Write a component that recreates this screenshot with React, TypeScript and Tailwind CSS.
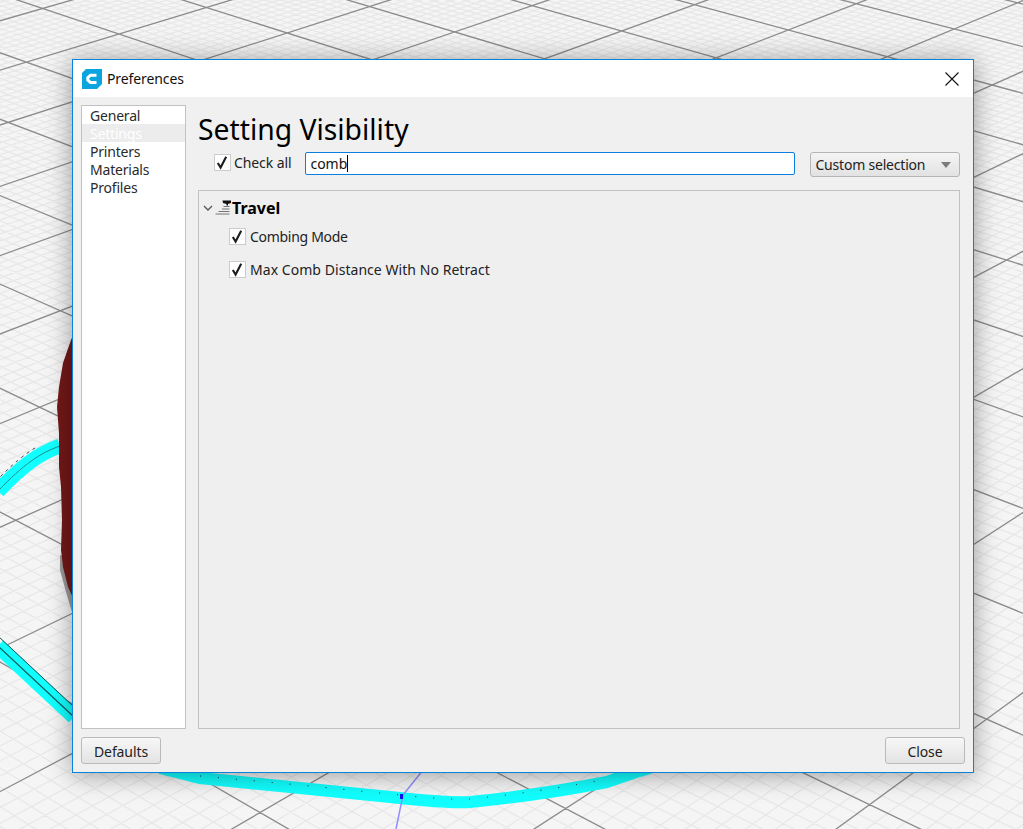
const font = "font-['Noto_Sans',sans-serif]"

// ground plane: i and j are grid cells, fitted from where the heavy lines cross
function project(i: number, j: number) {
  const q = (i + j) / 2
  const n = i - j
  const w = 1 - 0.0283 * n + 0.0015 * q
  return [(119 + 168.5 * q - 9.05 * n) / w, (34 - 0.96 * q + 25.8 * n) / w]
}

function gridPath(from: number, to: number, step: number) {
  let d = ''
  const count = Math.round((to - from) / step)
  for (let k = 0; k <= count; k++) {
    const v = from + k * step
    const a = project(v, v - 22)
    const b = project(v, v + 4)
    const c = project(v + 22, v)
    const e = project(v - 4, v)
    d += `M${a[0].toFixed(1)} ${a[1].toFixed(1)}L${b[0].toFixed(1)} ${b[1].toFixed(1)}`
    d += `M${c[0].toFixed(1)} ${c[1].toFixed(1)}L${e[0].toFixed(1)} ${e[1].toFixed(1)}`
  }
  return d
}

function Scene() {
  return (
    <svg className="absolute inset-0" width="1023" height="829" viewBox="0 0 1023 829">
      <rect width="1023" height="829" fill="#f5f5f5" />
      <path d={gridPath(-12, 16, 0.1)} stroke="#e8e8e8" strokeWidth="1.3" fill="none" />
      <path d={gridPath(-12, 16, 1)} stroke="#8c8c8c" strokeWidth="1.3" fill="none" />

      {/* upper left track */}
      <path d="M60 446 C40 453 24 464 -2 491" stroke="#12ffff" strokeWidth="15" fill="none" />
      <path d="M60 446 C40 453 24 464 -2 491" stroke="#1b8f8f" strokeWidth="1" fill="none" />
      <path d="M35 448 C25 454 14 463 0 477" stroke="#123" strokeWidth="0.8" strokeDasharray="3 4" fill="none" />

      {/* lower left track */}
      <path d="M-2 646 L74 717" stroke="#12ffff" strokeWidth="15" fill="none" />
      <path d="M-2 646 L74 717" stroke="#0f5f5f" strokeWidth="1.2" fill="none" />
      <path d="M-2 636 L74 707" stroke="#174a4a" strokeWidth="1" fill="none" />

      {/* bottom track */}
      <path
        d="M160 768 L200 778 L300 788 L400 798 Q445 803 470 802 Q540 795 607 782 L636 772 L650 768"
        stroke="#12ffff"
        strokeWidth="12"
        fill="none"
      />
      <path d="M200 776 L300 785 L400 795 Q445 800 470 799 Q540 792 607 779" stroke="#123" strokeWidth="1" strokeDasharray="1 17" fill="none" />

      {/* z axis */}
      <path d="M423 770 L403 795 L396 829" stroke="#8f8fff" strokeWidth="1.5" fill="none" />
      <rect x="400" y="794" width="3" height="5" fill="#1111ee" />

      {/* model */}
      <path d="M60 555 L60 570 L66 592 L72 612 L76 612 L76 560Z" fill="#9a9a9a" />
      <path
        d="M74 333 L71 340 L63 363 L59 387 L57 407 L59 433 L59 467 L61 487 L62 520 L61 550 L63 567 L68 587 L74 600Z"
        fill="#731818"
      />
    </svg>
  )
}

function Check() {
  return (
    <span className="flex h-[17px] w-[17px] shrink-0 items-center justify-center border border-[#cccccc] bg-white">
      <svg width="15" height="15" viewBox="0 0 15 15">
        <path d="M2.8 8 L5.6 12.6 L11.2 1.8" stroke="#1c1c1c" strokeWidth="2.1" fill="none" />
      </svg>
    </span>
  )
}

function Logo() {
  return (
    <svg width="20" height="20" viewBox="0 0 20 20">
      <path d="M4 0 H20 V15 L15 20 H0 V4Z" fill="#0aa5de" />
      <path d="M14.5 6.2 H8.5 L5.8 8.6 V11 L8.5 13.6 H14.5" stroke="#fff" strokeWidth="3" fill="none" />
    </svg>
  )
}

function TravelIcon() {
  return (
    <svg width="17" height="16" viewBox="0 0 17 16" className="shrink-0">
      <path d="M7.5 0.5 H16 V3 L13 4 V5.5 H11.5 V4 L8 3Z" fill="#111" />
      <path d="M8.5 6.5 H14.5 M7 9 H14.5 M3.5 11.5 H14.5 M0.5 14 H14.5" stroke="#777" strokeWidth="1" fill="none" />
    </svg>
  )
}

function Button({ label }: { label: string }) {
  return (
    <button className="flex h-[27px] w-20 items-center justify-center rounded-[3px] border border-[#bababa] bg-gradient-to-b from-[#f7f7f7] to-[#e3e3e3] pt-[2px] text-[14px] tracking-[-0.1px] text-[#222]">
      {label}
    </button>
  )
}

const sections = ['General', 'Settings', 'Printers', 'Materials', 'Profiles']

export default function App() {
  return (
    <div className={`relative h-[829px] w-[1023px] overflow-hidden ${font}`}>
      <Scene />

      <div className="absolute left-[72px] top-[59px] flex h-[714px] w-[902px] flex-col border border-[#0a82dc] bg-[#f0f0f0] shadow-[0_2px_24px_rgba(0,0,0,0.38)]">
        <div className="flex h-[37px] shrink-0 items-center bg-white pl-[9px] pr-[14px]">
          <Logo />
          <span className="ml-[5px] text-[14px] tracking-[-0.1px] text-[#111]">Preferences</span>
          <svg className="ml-auto" width="14" height="14" viewBox="0 0 14 14">
            <path d="M0.5 0.5 L13.5 13.5 M13.5 0.5 L0.5 13.5" stroke="#111" strokeWidth="1.1" fill="none" />
          </svg>
        </div>

        <div className="flex min-h-0 flex-1 gap-3 pl-2 pr-[13px] pt-2">
          <div className="w-[105px] shrink-0 border border-[#c2c2c2] bg-white">
            {sections.map((s) => (
              <div
                key={s}
                className={`h-[18px] pl-2 pt-px text-[14px] leading-[18px] tracking-[-0.2px] ${s === 'Settings' ? 'bg-[#ececec] text-white' : 'text-[#2a2a2a]'}`}
              >
                {s}
              </div>
            ))}
          </div>

          <div className="flex min-w-0 flex-1 flex-col">
            <h1 className="h-[47px] text-[28.3px] font-normal leading-[48px] text-black">Setting Visibility</h1>

            <div className="flex h-[25px] items-start">
              <div className="ml-4 mt-[2px] flex items-center">
                <Check />
                <span className="ml-[3px] pt-px text-[14px] leading-4 tracking-[-0.1px] text-[#222]">Check all</span>
              </div>
              <div className="ml-[14px] flex h-[23px] w-[490px] items-center rounded-[2px] border border-[#0a7fe0] bg-white pl-1 text-[14px] text-[#111]">
                comb
                <span className="h-[17px] w-px bg-black" />
              </div>
              <div className="ml-[15px] flex h-[25px] flex-1 items-center justify-between rounded-[3px] border border-[#b5b5b5] bg-gradient-to-b from-[#f4f4f4] to-[#e2e2e2] pl-1 pr-2 text-[14px] tracking-[-0.2px] text-[#222]">
                Custom selection
                <svg width="10" height="6" viewBox="0 0 10 6">
                  <path d="M0 0 H10 L5 6Z" fill="#7c7c7c" />
                </svg>
              </div>
            </div>

            <div className="mt-[13px] flex-1 border border-[#c2c2c2] bg-[#efefef] pt-[9px]">
              <div className="flex items-center">
                <svg className="ml-1 mr-[2px]" width="10" height="8" viewBox="0 0 10 8">
                  <path d="M1 2 L5 6 L9 2" stroke="#555" strokeWidth="1.3" fill="none" />
                </svg>
                <TravelIcon />
                <span className="text-[16px] font-bold leading-4 text-black">Travel</span>
              </div>
              <div className="ml-[30px] mt-3 flex items-center">
                <Check />
                <span className="ml-1 pt-px text-[14px] leading-4 tracking-[-0.3px] text-[#222]">Combing Mode</span>
              </div>
              <div className="ml-[30px] mt-4 flex items-center">
                <Check />
                <span className="ml-1 pt-px text-[14px] leading-4 tracking-[0.05px] text-[#222]">Max Comb Distance With No Retract</span>
              </div>
            </div>
          </div>
        </div>

        <div className="flex h-[43px] shrink-0 items-start justify-between pl-2 pr-2 pt-2">
          <Button label="Defaults" />
          <Button label="Close" />
        </div>
      </div>
    </div>
  )
}
